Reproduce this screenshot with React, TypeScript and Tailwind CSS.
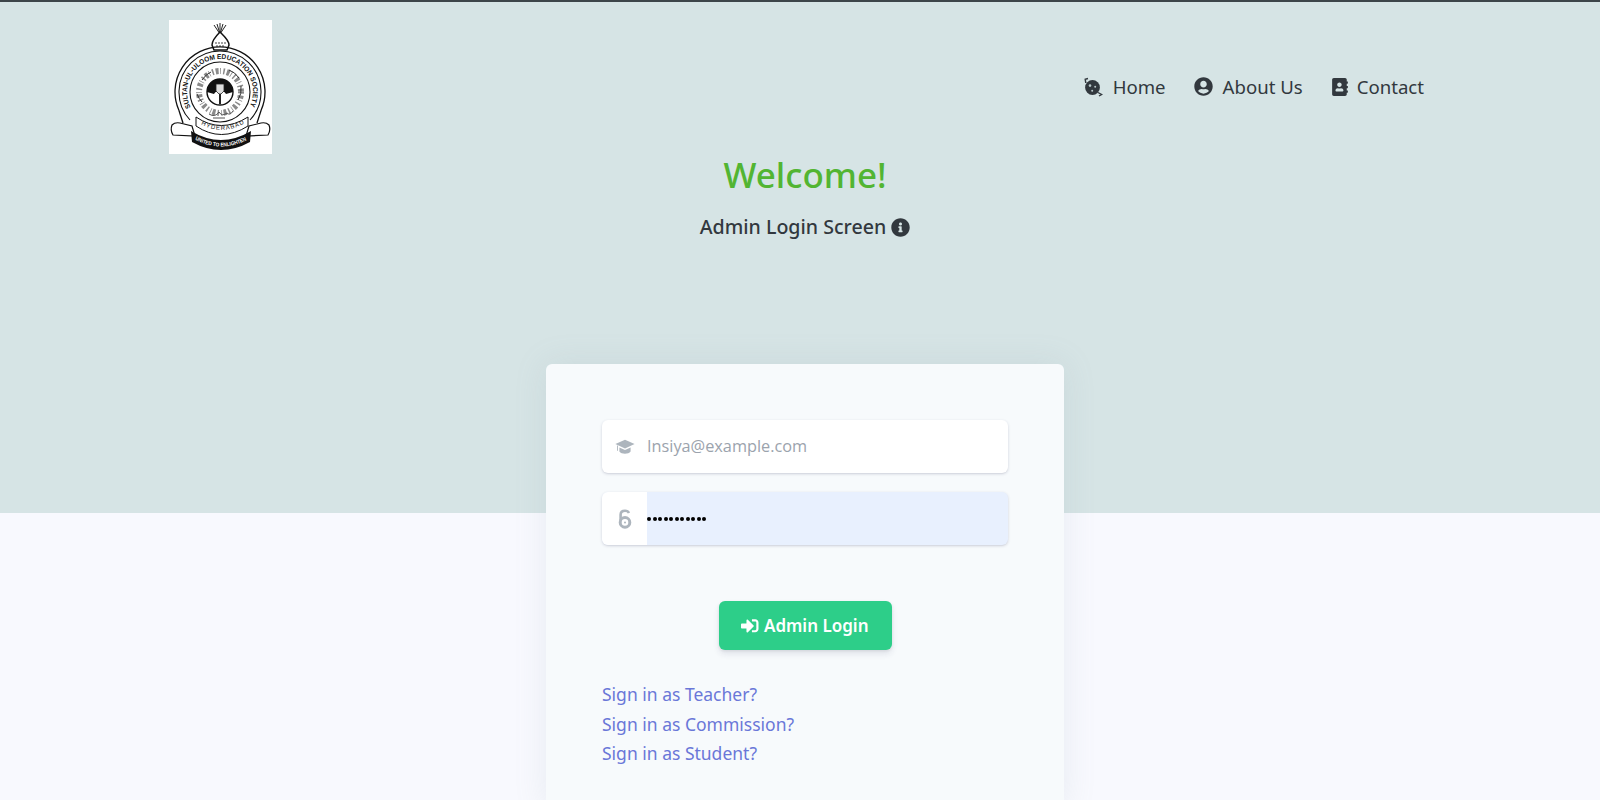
import { FaAddressBook, FaInfoCircle, FaSignInAlt, FaUserCircle } from "react-icons/fa";

function PlanetIcon() {
  return (
    <svg viewBox="0 0 20 20" className="h-[20px] w-[20px]" fill="none">
      <circle cx="9.5" cy="10.5" r="7.4" fill="#32383e" />
      <circle cx="7" cy="8.6" r="1.3" fill="#b9c8ca" />
      <circle cx="12.2" cy="9.8" r="1" fill="#b9c8ca" />
      <circle cx="9.2" cy="13.8" r="1" fill="#b9c8ca" />
      <path d="M5 1.5 L2.2 2.2 L2.8 6 M15 15.5 L18.6 17.5 L16 19" stroke="#32383e" strokeWidth="1.4" />
    </svg>
  );
}

function CapIcon() {
  return (
    <svg viewBox="0 0 20 16" className="h-[16px] w-[20px]" fill="#adb5bd">
      <path d="M10 .8 19.6 5 10 9.4 .4 5Z" />
      <path d="M4.4 8.4 10 11l5.6-2.6V12.6C13.6 15.6 6.4 15.6 4.4 12.6Z" />
      <path d="M2 6.5h.9v5.2H2Z" />
    </svg>
  );
}

function OpenLockIcon() {
  return (
    <svg viewBox="0 0 14 20" className="h-[20px] w-[14px]" fill="none">
      <path d="M2.6 11V5.8C2.6 3.2 4.5 1.8 7 1.8c1.8 0 3.3.7 4 2.2" stroke="#adb5bd" strokeWidth="2.6" />
      <circle cx="7" cy="13.4" r="4.8" stroke="#adb5bd" strokeWidth="3" />
      <circle cx="7" cy="13.4" r="1" fill="#adb5bd" />
    </svg>
  );
}

function Logo() {
  return (
    <svg viewBox="0 0 103 134" className="h-[134px] w-[103px] bg-white">
      <defs>
        <path id="ring" d="M21.9 87.5 A33 33 0 1 1 80.1 87.5" />
        <path id="seal" d="M25 119 Q52 134 80 119" />
        <path id="hyd" d="M27 101 Q52 119 79 101" />
      </defs>
      <path d="M51 14 L45 5 M51 14 L48 4 M51 14 V3 M51 14 L54 4 M51 14 L57 5" stroke="#222" strokeWidth="1" />
      <path d="M51 12 C47 16 43 20 43 25 L45 30 L58 30 L60 25 C60 20 55 16 51 12Z" fill="#fff" stroke="#111" strokeWidth="1.5" />
      <path d="M46 23 h11 M47 26 h9" stroke="#444" strokeWidth="1.2" strokeDasharray="2 1" />
      <path d="M9.8 90 A45 45 0 1 1 92.2 90 L88 103" fill="none" stroke="#111" strokeWidth="1.3" />
      <path d="M9.8 90 L14 103" fill="none" stroke="#111" strokeWidth="1.3" />
      <path d="M21 100 A41 41 0 1 1 81 100" fill="none" stroke="#111" strokeWidth="1.1" />
      <circle cx="51" cy="72" r="30" fill="none" stroke="#111" strokeWidth="1.1" />
      <text fontFamily="'Liberation Sans', sans-serif" fontSize="7" fontWeight="700" fill="#111">
        <textPath href="#ring" textLength="134" lengthAdjust="spacingAndGlyphs">SULTAN-UL-ULOOM EDUCATION SOCIETY</textPath>
      </text>
      {/* calligraphy ring, only suggested */}
      <circle cx="51" cy="72" r="21" fill="none" stroke="#8a8a8a" strokeWidth="6" strokeDasharray="1.5 2 3 1.5 .8 2.5" />
      <path d="M33 60 q4 -6 9 -8 M60 50 q6 2 10 8 M28 74 q2 5 5 8 M72 66 q1 8 -3 14" fill="none" stroke="#333" strokeWidth="1" />
      <circle cx="51" cy="72" r="13" fill="#fff" stroke="#111" strokeWidth="1.4" />
      <path d="M38 72 A13 13 0 0 1 64 72 L57 74 A7 7 0 0 0 45 74Z" fill="#111" />
      <path d="M47 64 h8 v7 l-3 3 h-2 l-3 -3Z" fill="#ddd" stroke="#222" strokeWidth=".8" />
      <path d="M50 74 h2 v10 h-2Z" fill="#222" />
      <path d="M40 94 q6 4 10 -2 q3 5 8 1 q3 3 6 -2 M44 98 h12" fill="none" stroke="#555" strokeWidth="1" />
      <path d="M3 105 q3 -3 8 -2 l12 3 l3 10 l-22 -1 q-3 -5 -1 -10Z" fill="#fff" stroke="#111" strokeWidth="1.2" />
      <path d="M100 105 q-3 -3 -8 -2 l-12 3 l-3 10 l22 -1 q3 -5 1 -10Z" fill="#fff" stroke="#111" strokeWidth="1.2" />
      <path d="M27 97 Q52 114 79 97 L79 106 Q52 123 27 106Z" fill="#fff" stroke="#111" strokeWidth="1" />
      <text fontFamily="'Liberation Sans', sans-serif" fontSize="6" fill="#111" letterSpacing="1">
        <textPath href="#hyd" startOffset="6">HYDERABAD</textPath>
      </text>
      <path d="M22 111 Q52 129 82 111 L81 122 Q52 138 23 122Z" fill="#111" />
      <text fontFamily="'Liberation Sans', sans-serif" fontSize="5.4" fontWeight="700" fill="#fff">
        <textPath href="#seal" textLength="54" lengthAdjust="spacingAndGlyphs" startOffset="1">UNITED TO ENLIGHTEN</textPath>
      </text>
    </svg>
  );
}

export default function App() {
  return (
    <div className="h-[800px] overflow-hidden bg-[#f8f9fe]">
      <div className="w-[1610px] font-['Noto_Sans',sans-serif] text-[#32383e]">
        <div className="h-[513px] border-t-2 border-[#3d4549] bg-[#d6e4e5]">
          <nav className="ml-[169px] flex w-[1255px] items-center justify-between pt-[18px]">
            <Logo />
            <ul className="flex items-center gap-7 text-[18.6px]">
              <li className="flex items-center gap-[10px]">
                <PlanetIcon />
                Home
              </li>
              <li className="flex items-center gap-[10px]">
                <FaUserCircle className="text-[19px]" />
                About Us
              </li>
              <li className="flex items-center gap-2">
                <FaAddressBook className="text-[18px]" />
                Contact
              </li>
            </ul>
          </nav>
          <div className="mt-[-1px] text-center">
            <h1 className="text-[35px] leading-[44px] font-medium text-[#52b532]">Welcome!</h1>
            <p className="mt-4 flex items-center justify-center gap-[5px] text-[19.6px] leading-7 font-medium">
              Admin Login Screen
              <FaInfoCircle className="text-[19px]" />
            </p>
          </div>
        </div>
        <div className="relative mx-auto mt-[-149px] w-[518px] rounded-md bg-[#f7fafc] px-14 pt-14 pb-10 shadow-[0_0_32px_rgba(136,152,170,0.15)]">
          <div className="flex h-[53px] items-center rounded-md bg-white shadow-[0_1px_3px_rgba(50,50,93,0.2),0_1px_0_rgba(0,0,0,0.02)]">
            <span className="flex w-[45px] justify-center">
              <CapIcon />
            </span>
            <span className="font-['Open_Sans',sans-serif] text-[16.3px] text-[#9ba3ad]">Insiya@example.com</span>
          </div>
          <div className="mt-[19px] flex h-[53px] overflow-hidden rounded-md bg-[#e8f0fe] shadow-[0_1px_3px_rgba(50,50,93,0.2),0_1px_0_rgba(0,0,0,0.02)]">
            <span className="flex w-[45px] items-center justify-center bg-white">
              <OpenLockIcon />
            </span>
            <span className="flex items-center gap-[1.5px]">
              {Array.from({ length: 11 }).map((_, i) => (
                <span key={i} className="h-1 w-1 rounded-full bg-black" />
              ))}
            </span>
          </div>
          <div className="mt-14 flex justify-center">
            <button className="flex h-[49px] w-[173px] items-center justify-center gap-[5px] rounded-md bg-[#2dce89] text-[17px] font-semibold text-white shadow-[0_4px_6px_rgba(50,50,93,0.11),0_1px_3px_rgba(0,0,0,0.08)]">
              <FaSignInAlt className="text-[17.5px]" />
              Admin Login
            </button>
          </div>
          <div className="mt-[30px] flex flex-col text-[17.5px] leading-[29.6px] text-[#6a77d8]">
            <a>Sign in as Teacher?</a>
            <a>Sign in as Commission?</a>
            <a>Sign in as Student?</a>
          </div>
        </div>
      </div>
    </div>
  );
}
